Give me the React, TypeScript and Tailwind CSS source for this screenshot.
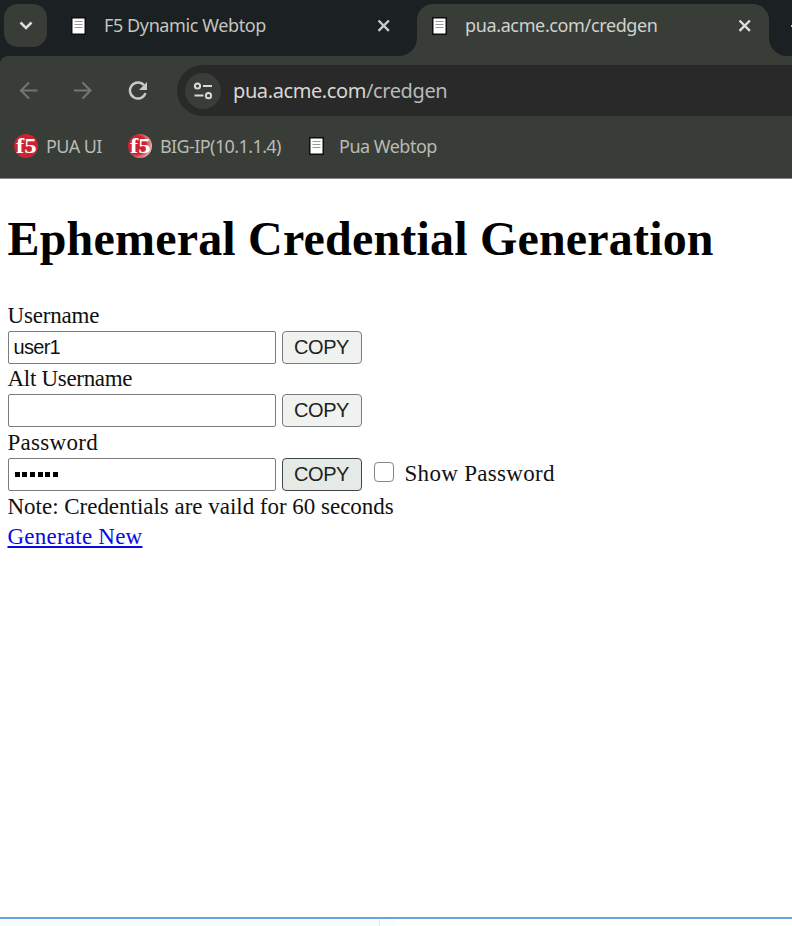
import type { ReactNode } from "react";

function PageIcon() {
  return (
    <svg width="16" height="18" viewBox="0 0 16 18" className="block shrink-0">
      <rect width="15" height="18" fill="#0c0d0c" />
      <rect x="1.5" y="1.5" width="12" height="15" fill="#fff" />
      <path d="M3.5 4.5h8M3.5 7.5h8M3.5 10.5h8" stroke="#999" strokeWidth="1.1" />
    </svg>
  );
}

function CloseIcon({ color }: { color: string }) {
  return (
    <svg width="14" height="14" viewBox="0 0 14 14" className="block shrink-0">
      <path d="M1.5 1.5l10.4 10.4M11.9 1.5L1.5 11.9" stroke={color} strokeWidth="2.4" />
    </svg>
  );
}

function F5Icon({ id, light }: { id: string; light: string }) {
  return (
    <svg width="24" height="24" viewBox="0 0 24 24" className="block shrink-0 overflow-visible">
      <defs>
        <radialGradient id={id} cx="0.35" cy="0.45" r="0.7">
          <stop offset="0.55" stopColor="#cf2230" />
          <stop offset="1" stopColor={light} />
        </radialGradient>
      </defs>
      <circle cx="12" cy="12" r="12" fill={`url(#${id})`} />
      <text x="2" y="19" fontFamily="Liberation Serif, serif" fontWeight="700" fontSize="21" fill="#fff" textLength="20.5" lengthAdjust="spacingAndGlyphs">f5</text>
    </svg>
  );
}

function Field({ label, labelClass, value, active, children }: { label: string; labelClass: string; value: string; active?: boolean; children?: ReactNode }) {
  return (
    <div className="h-[63.5px]">
      <label className={`block h-[30px] leading-[30px] ${labelClass}`}>{label}</label>
      <div className="flex h-[33px] items-center">
        <div className="flex h-[33px] w-[268px] items-center rounded-[2px] border-[1.5px] border-[#7b7b7b] bg-white pl-[5px] font-['Liberation_Sans',sans-serif] text-[20px] tracking-[-0.7px] text-[#111]">
          {value === "******" ? (
            <span className="ml-px mt-px flex gap-[2.7px]">
              {[0, 1, 2, 3, 4, 5].map((i) => <i key={i} className="size-[5px] bg-black" />)}
            </span>
          ) : value}
        </div>
        <button className={`ml-1.5 h-[33px] w-20 rounded-[4px] border pb-px font-['Liberation_Sans',sans-serif] text-[20px] tracking-[-0.4px] text-[#222] ${active ? "border-[#424746] bg-[#e5eae6]" : "border-[#7b7d7b] bg-[#f0f2ef]"}`}>
          COPY
        </button>
        {children}
      </div>
    </div>
  );
}

export default function App() {
  return (
    <div className="flex h-[926px] w-[792px] flex-col overflow-hidden bg-white">
      <header className="h-[179px] shrink-0 border-b border-[#858784] bg-[#393d38] font-['Noto_Sans',sans-serif]">
        <div className="flex h-14 bg-[#393d38]">
          <div className="flex h-14 w-[417px] shrink-0 rounded-br-[18px] bg-[#1b2022]">
            <div className="ml-1 mt-1 flex size-[43px] items-center justify-center rounded-[14px] bg-[#393d38]">
              <svg width="14" height="10" viewBox="0 0 14 10"><path d="M1.5 1.5l5.5 5.5L12.5 1.5" fill="none" stroke="#dedfdc" strokeWidth="2.5" /></svg>
            </div>
            <div className="flex h-[51px] items-center pl-6">
              <PageIcon />
              <span className="ml-[17px] w-[273px] whitespace-nowrap text-[18px] tracking-[-0.4px] text-[#c3c5be]">F5 Dynamic Webtop</span>
              <CloseIcon color="#cacbc6" />
            </div>
          </div>
          <div className="flex flex-1 bg-[#1b2022]">
            <div className="mt-1 flex h-[52px] w-[352px] items-center rounded-t-[16px] bg-[#393d38] pb-[9px] pl-[15px]">
              <PageIcon />
              <span className="ml-[17px] w-[273px] whitespace-nowrap text-[18px] tracking-[-0.37px] text-[#d0d2cc]">pua.acme.com/credgen</span>
              <CloseIcon color="#dedfdc" />
            </div>
            <div className="flex h-14 flex-1 bg-[#393d38]">
              <div className="flex h-14 flex-1 justify-end rounded-bl-[18px] bg-[#1b2022]">
                <div className="mt-[25px] h-0.5 w-px bg-[#c3c5be]" />
              </div>
            </div>
          </div>
        </div>
        <div className="bg-[linear-gradient(to_right,#1b2022_20px,#393d38_20px)]">
          <div className="flex h-[60px] items-center rounded-tl-[8px] bg-[#393d38] pt-[9px]">
            <svg width="160" height="30" viewBox="0 0 160 30" fill="none" className="shrink-0">
              <path d="M37.5 14.5H21M29 6.5l-8 8 8 8M74 14.5h16.5M82.5 6.5l8 8-8 8" stroke="#747572" strokeWidth="2.1" />
              <path d="M144 9.3a8 8 0 1 0 1.5 7.9" stroke="#c8cac5" strokeWidth="2.4" />
              <path d="M147 6v8h-8z" fill="#c8cac5" />
            </svg>
            <div className="ml-[17px] flex h-[51px] flex-1 items-center rounded-l-full bg-[#282928] pl-2">
              <div className="flex size-9 items-center justify-center rounded-full bg-[#393d38]">
                <svg width="20" height="18" viewBox="0 0 20 18" fill="none" stroke="#d9dad5" strokeWidth="2">
                  <circle cx="4.5" cy="4" r="2.6" /><path d="M10 4h9M1.5 13.5h9" /><circle cx="15.5" cy="13.7" r="2.6" />
                </svg>
              </div>
              <span className="ml-3 whitespace-nowrap text-[20px] leading-none tracking-[-0.4px] text-[#d7d8d4]">pua.acme.com<span className="text-[#b9bbb7]">/credgen</span></span>
            </div>
          </div>
        </div>
        <div className="flex h-[60px] items-center whitespace-nowrap pl-3.5 text-[18px] text-[#b8bbb4]">
          <F5Icon id="f5-red" light="#cf2230" />
          <span className="ml-2 w-[82px] tracking-[-0.6px]">PUA UI</span>
          <F5Icon id="f5-shine" light="#e6d5d5" />
          <span className="ml-2 w-[149px] tracking-[-0.6px]">BIG-IP(10.1.1.4)</span>
          <PageIcon />
          <span className="ml-[14px] tracking-[-0.5px]">Pua Webtop</span>
        </div>
      </header>
      <main className="h-[738px] shrink-0 pl-[7.5px] font-['Liberation_Serif',serif] text-[23px] text-[#111]">
        <h1 className="mt-8 h-[55px] whitespace-nowrap text-[48px] font-bold leading-[55px] tracking-[0.19px] text-black">Ephemeral Credential Generation</h1>
        <div className="mt-[34.5px]">
          <Field label="Username" labelClass="tracking-[-0.2px]" value="user1" />
          <Field label="Alt Username" labelClass="tracking-[-0.3px]" value="" />
          <Field label="Password" labelClass="tracking-[0.3px]" value="******" active>
            <span className="mb-1 ml-3 size-5 rounded-[4px] border-[1.5px] border-[#858585] bg-white" />
            <span className="ml-[11px] whitespace-nowrap tracking-[0.3px]">Show Password</span>
          </Field>
        </div>
        <p className="h-[31px] leading-[31px] tracking-[-0.02px]">Note: Credentials are vaild for 60 seconds</p>
        <a className="block h-[31px] w-fit leading-[30px] tracking-[0.23px] text-[#0909e8] underline decoration-[1.5px] underline-offset-2">Generate New</a>
      </main>
      <footer className="flex h-[9px] shrink-0 border-t-2 border-[#6ba3dc] bg-white">
        <div className="w-[380px] border-r border-[#e2e8f5] bg-[#f7faff]" />
        <div className="w-4 bg-[#fafdff]" />
      </footer>
    </div>
  );
}
